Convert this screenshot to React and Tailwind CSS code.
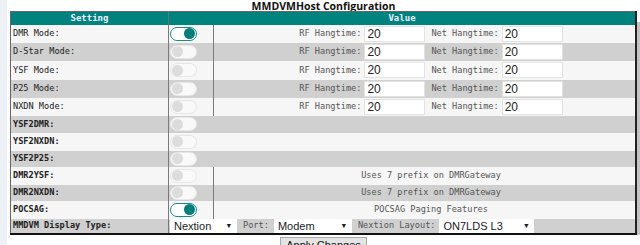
import { useState } from "react"

const mono = { fontFamily: '"DejaVu Sans Mono", "Liberation Mono", monospace' }

const rows = [
  { label: "DMR Mode:", on: true, kind: "hang", h: "h-[18px]" },
  { label: "D-Star Mode:", kind: "hang", h: "h-[18px]" },
  { label: "YSF Mode:", kind: "hang", h: "h-[19px]" },
  { label: "P25 Mode:", kind: "hang", h: "h-[18px]" },
  { label: "NXDN Mode:", kind: "hang", h: "h-[18px]" },
  { label: "YSF2DMR:", bold: true, h: "h-[17px]" },
  { label: "YSF2NXDN:", bold: true, h: "h-[18px]" },
  { label: "YSF2P25:", bold: true, h: "h-[16px]" },
  { label: "DMR2YSF:", bold: true, note: "Uses 7 prefix on DMRGateway", h: "h-[18px]" },
  { label: "DMR2NXDN:", bold: true, note: "Uses 7 prefix on DMRGateway", h: "h-[16px]" },
  { label: "POCSAG:", bold: true, on: true, note: "POCSAG Paging Features", h: "h-[18px]" },
]

function Toggle({ on }) {
  const [checked, setChecked] = useState(on)
  return (
    <div
      onClick={() => setChecked(!checked)}
      className={`w-[27px] h-[14px] rounded-full border flex items-center px-[1px] cursor-pointer ${checked ? "border-[#1b8a85] bg-white justify-end" : "border-[#e6e6e6] bg-[#f9f9f9] justify-start"}`}
    >
      <div className={`w-[11px] h-[11px] rounded-full ${checked ? "bg-[#00807b]" : "bg-[#dcdcdc]"}`} />
    </div>
  )
}

function NumInput() {
  return (
    <input
      type="text"
      defaultValue="20"
      className="w-[61px] h-[16px] bg-white border border-[#e2e2e2] px-[2px] text-[12px] leading-none text-[#222] align-middle outline-none"
      style={{ fontFamily: '"Liberation Sans", Arial, sans-serif' }}
    />
  )
}

function Select({ value, options, width }) {
  return (
    <div className={`relative inline-block h-[14px] bg-white ${width}`}>
      <select
        defaultValue={value}
        className="appearance-none w-full h-full bg-white pl-[4px] text-[11px] leading-[14px] text-[#222] outline-none"
        style={{ fontFamily: '"Liberation Sans", Arial, sans-serif' }}
      >
        {options.map((o) => (
          <option key={o}>{o}</option>
        ))}
      </select>
      <span className="pointer-events-none absolute right-[6px] top-0 text-[7px] leading-[14px] text-[#222]">▼</span>
    </div>
  )
}

export default function App() {
  return (
    <div className="flex w-[640px] h-[245px] overflow-hidden bg-white">
      <div className="w-[7px] shrink-0 bg-[#edf1f6]" />
      <div className="flex flex-col w-[633px]">
        <h2
          className="h-[11px] text-center text-[10.5px] leading-[12px] font-bold text-[#111]"
          style={{ fontFamily: '"Open Sans", "Noto Sans", sans-serif' }}
        >
          MMDVMHost Configuration
        </h2>
        <div className="flex">
          <div className="w-[3px]" />
          <table
            className="table-fixed border-collapse w-[627px] border-l border-t border-[#666] border-r-2 border-b-2 border-r-[#222] border-b-[#111]"
            style={mono}
          >
            <colgroup>
              <col className="w-[158px]" />
              <col className="w-[45px]" />
              <col />
            </colgroup>
            <thead>
              <tr className="h-[13px] bg-[#00827e] text-[#eef]">
                <th className="text-[9px] font-bold leading-none border-r border-[#5a7a78]">Setting</th>
                <th colSpan={2} className="text-[9px] font-bold leading-none">Value</th>
              </tr>
            </thead>
            <tbody className="text-[8.6px]">
              {rows.map((r, i) => (
                <tr key={r.label} className={`${r.h} ${i % 2 ? "bg-[#d0d0d0]" : "bg-[#f6f6f6]"}`}>
                  <td className={`pl-[2px] text-[#222] border-r border-[#7a7a7a] ${r.bold ? "font-bold" : ""}`}>{r.label}</td>
                  {r.kind === "hang" || r.note ? (
                    <>
                      <td className="pl-[1px] border-r border-[#7a7a7a]"><Toggle on={!!r.on} /></td>
                      <td className="text-[#555] pl-[13px]">
                        {r.kind === "hang" ? (
                          <div className="flex items-center justify-center gap-[3px]">
                            <span>RF Hangtime:</span>
                            <NumInput />
                            <span className="ml-[3px]">Net Hangtime:</span>
                            <NumInput />
                          </div>
                        ) : (
                          <div className="text-center">{r.note}</div>
                        )}
                      </td>
                    </>
                  ) : (
                    <td colSpan={2} className="pl-[1px]"><Toggle on={!!r.on} /></td>
                  )}
                </tr>
              ))}
              <tr className="h-[14px] bg-[#d0d0d0]">
                <td className="pl-[2px] text-[#222] font-bold border-r border-[#7a7a7a]">MMDVM Display Type:</td>
                <td colSpan={2} className="pl-[1px] text-[#555]">
                  <div className="flex items-center">
                    <Select value="Nextion" options={["None", "OLED", "Nextion", "HD44780", "TFT Serial"]} width="w-[67px]" />
                    <span className="ml-[6px] mr-[5px]">Port:</span>
                    <Select value="Modem" options={["Modem", "/dev/ttyAMA0", "/dev/ttyUSB0"]} width="w-[78px]" />
                    <span className="ml-[6px] mr-[4px]">Nextion Layout:</span>
                    <Select value="ON7LDS L3" options={["G4KLX", "ON7LDS L2", "ON7LDS L3", "ON7LDS L3 HS"]} width="w-[95px]" />
                  </div>
                </td>
              </tr>
            </tbody>
          </table>
          <div className="w-[3px] mt-[11px] bg-[#c4c4c4]" />
        </div>
        <div className="flex justify-center pt-[2px]">
          <button
            className="h-[16px] px-[5px] bg-[#e4e4e4] border border-[#a9a9a9] text-[11px] leading-[14px] text-[#111]"
            style={{ fontFamily: '"Liberation Sans", Arial, sans-serif' }}
          >
            Apply Changes
          </button>
        </div>
      </div>
    </div>
  )
}
